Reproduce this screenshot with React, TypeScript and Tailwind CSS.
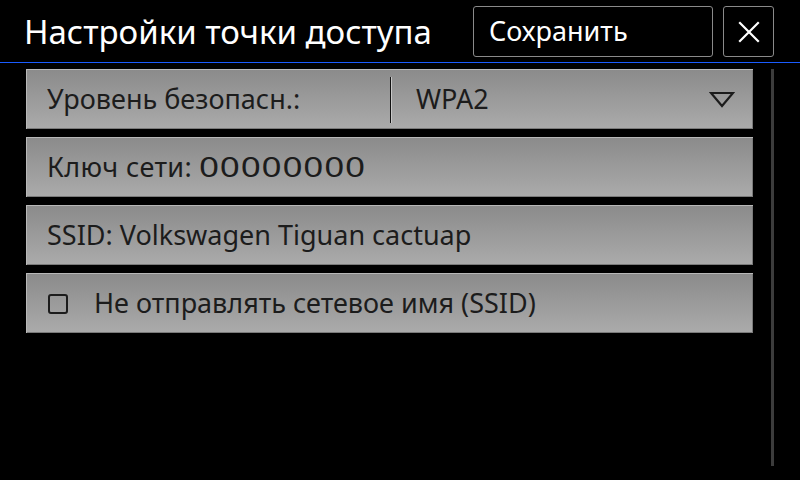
import React from "react";

const font = { fontFamily: '"Noto Sans", "DejaVu Sans", sans-serif' };

function Row({ children }: { children: React.ReactNode }) {
  return (
    <div className="h-[60px] flex items-center border-t border-l border-[#b8b8b8] bg-gradient-to-b from-[#8b8b8b] to-[#ababab] text-[#1c1c1c] text-[27px] shadow-[inset_-1px_-1px_0_#7a7a7a]">
      {children}
    </div>
  );
}

export default function App() {
  return (
    <div className="w-[800px] h-[480px] bg-black overflow-hidden flex flex-col" style={font}>
      <div className="h-[62px] flex items-start">
        <div className="flex-1 pl-[24px] pt-[10px] text-white text-[33px] leading-[44px] whitespace-nowrap">
          Настройки точки доступа
        </div>
        <div className="mt-[6px] w-[240px] h-[51px] border border-[#8a8a8a] rounded-[3px] flex items-center pl-[15px] text-white text-[27px]">
          Сохранить
        </div>
        <div className="mt-[6px] ml-[10px] mr-[26px] w-[51px] h-[51px] border border-[#8a8a8a] rounded-[3px] flex items-center justify-center">
          <svg width="22" height="22" viewBox="0 0 22 22">
            <path d="M2 2 L20 20 M20 2 L2 20" stroke="white" strokeWidth="2.2" strokeLinecap="square" />
          </svg>
        </div>
      </div>
      <div className="h-px bg-[#1a5cff]" />
      <div className="flex flex-1 pt-[6px]">
        <div className="ml-[26px] w-[727px] flex flex-col gap-[8px]">
          <Row>
            <div className="w-[363px] pl-[20px] flex items-center">Уровень безопасн.:</div>
            <div className="w-[2px] h-[46px] flex">
              <div className="w-px bg-[#111]" />
              <div className="w-px bg-[#c8c8c8]" />
            </div>
            <div className="flex-1 pl-[24px] flex items-center justify-between pr-[18px]">
              <span>WPA2</span>
              <svg width="26" height="18" viewBox="0 0 26 18">
                <path d="M2 2 L24 2 L13 15 Z" fill="none" stroke="#1c1c1c" strokeWidth="2.2" strokeLinejoin="miter" />
              </svg>
            </div>
          </Row>
          <Row>
            <div className="pl-[20px] whitespace-nowrap">
              <span className="tracking-[0.4px]">Ключ сети:</span>{" "}
              <span className="inline-block origin-left scale-x-[1.3] tracking-[0.6px]">00000000</span>
            </div>
          </Row>
          <Row>
            <div className="pl-[20px]">SSID: Volkswagen Tiguan cactuap</div>
          </Row>
          <Row>
            <div className="pl-[21px] flex items-center">
              <div className="w-[20px] h-[20px] border-2 border-[#1c1c1c] rounded-[3px]" />
              <span className="ml-[26px]">Не отправлять сетевое имя (SSID)</span>
            </div>
          </Row>
        </div>
        <div className="ml-[18px] w-[3px] h-[397px] bg-[#3c3c3c]" />
      </div>
    </div>
  );
}
